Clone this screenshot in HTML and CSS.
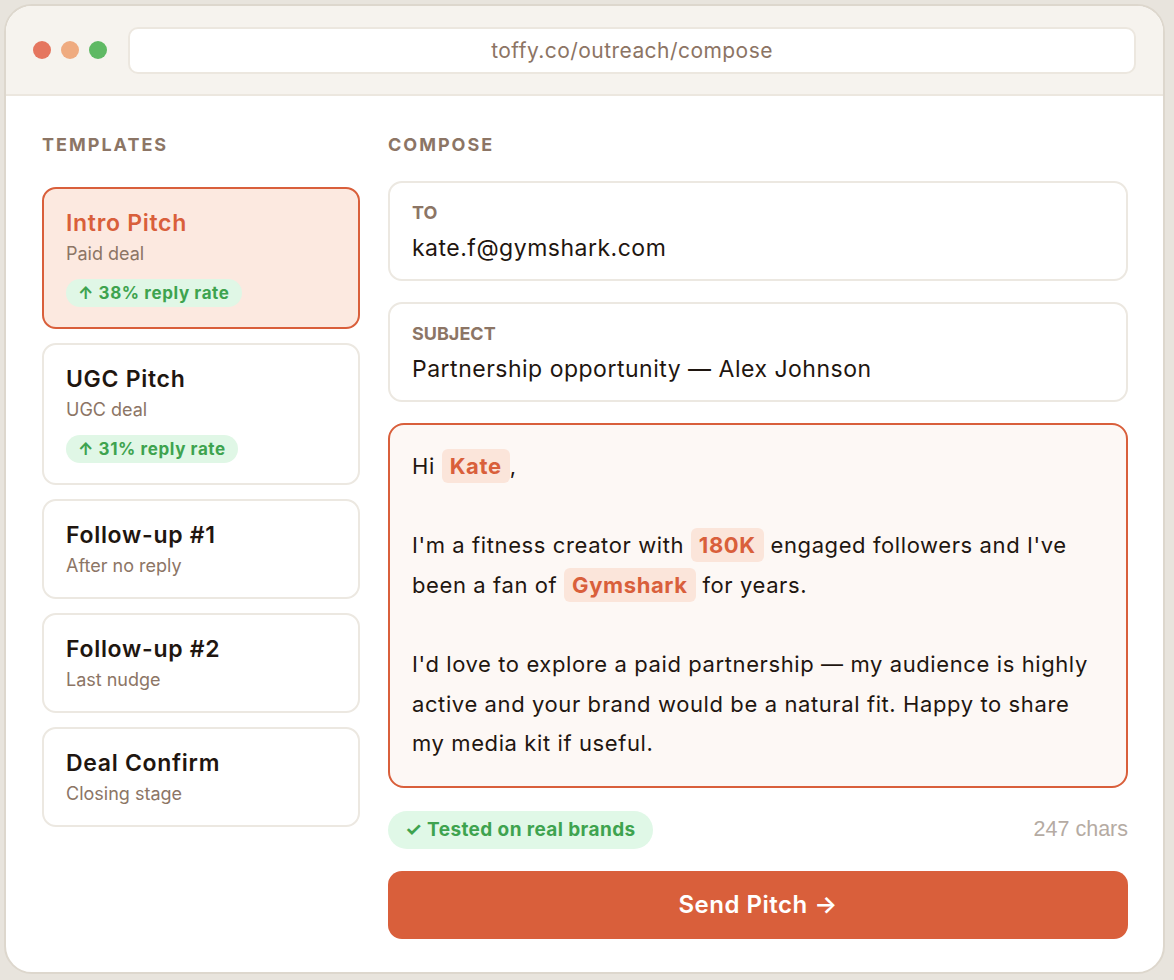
FILE: index.html
```html
<!DOCTYPE html>
<html lang="en">
<head>
    <meta charset="UTF-8">
    <meta name="viewport" content="width=device-width, initial-scale=1.0">
    <title>Toffy - Compose</title>
    <link rel="stylesheet" href="styles.css">
</head>
<body>
    <div class="window">
        <div class="titlebar">
            <div class="dots">
                <span class="dot red"></span>
                <span class="dot orange"></span>
                <span class="dot green"></span>
            </div>
            <div class="url">toffy.co/outreach/compose</div>
        </div>

        <div class="content">
            <aside class="templates">
                <h2 class="section-label left">Templates</h2>
                <div class="template-list">
                    <div class="template active">
                        <div class="template-title">Intro Pitch</div>
                        <div class="template-sub">Paid deal</div>
                        <span class="rate">↑ 38% reply rate</span>
                    </div>
                    <div class="template">
                        <div class="template-title">UGC Pitch</div>
                        <div class="template-sub">UGC deal</div>
                        <span class="rate">↑ 31% reply rate</span>
                    </div>
                    <div class="template">
                        <div class="template-title">Follow-up #1</div>
                        <div class="template-sub">After no reply</div>
                    </div>
                    <div class="template">
                        <div class="template-title">Follow-up #2</div>
                        <div class="template-sub">Last nudge</div>
                    </div>
                    <div class="template">
                        <div class="template-title">Deal Confirm</div>
                        <div class="template-sub">Closing stage</div>
                    </div>
                </div>
            </aside>

            <main class="compose">
                <h2 class="section-label right">Compose</h2>

                <div class="field">
                    <div class="field-label">TO</div>
                    <div class="field-value">kate.f@gymshark.com</div>
                </div>
                <div class="field">
                    <div class="field-label">SUBJECT</div>
                    <div class="field-value">Partnership opportunity — Alex Johnson</div>
                </div>

                <div class="message">
                    <p>Hi <span class="chip">Kate</span>,</p>
                    <p>I'm a fitness creator with <span class="chip">180K</span> engaged followers and I've been a fan of <span class="chip">Gymshark</span> for years.</p>
                    <p>I'd love to explore a paid partnership — my audience is highly active and your brand would be a natural fit. Happy to share my media kit if useful.</p>
                </div>

                <div class="meta-row">
                    <span class="tested">✓ Tested on real brands</span>
                    <span class="chars">247 chars</span>
                </div>

                <button type="button" class="send">Send Pitch →</button>
            </main>
        </div>
    </div>
</body>
</html>
```

FILE: styles.css
```css
*{
    box-sizing: border-box;
}

body{
    margin: 0;
    padding: 4px;
    background-color: #e8e4dd;
    font-family: "Inter", "DejaVu Sans", sans-serif;
    color: #1f1610;
}

.window{
    width: 1161px;
    height: 970px;
    background-color: #fff;
    border: 2px solid #ddd7cd;
    border-radius: 28px;
    overflow: hidden;
}

.titlebar{
    height: 90px;
    display: flex;
    align-items: center;
    padding: 0 27px;
    background-color: #f6f3ee;
    border-bottom: 2px solid #ece7df;
}

.dots{
    display: flex;
    gap: 10px;
    margin-right: 21px;
}

.dot{
    width: 18px;
    height: 18px;
    border-radius: 50%;
}

.dot.red{ background-color: #e5765f; }
.dot.orange{ background-color: #efab80; }
.dot.green{ background-color: #5fb964; }

.url{
    flex: 1;
    height: 47px;
    display: flex;
    align-items: center;
    justify-content: center;
    background-color: #fff;
    border: 2px solid #ece7df;
    border-radius: 10px;
    color: #8c7464;
    font-size: 21px;
    letter-spacing: 0.45px;
}

.content{
    display: grid;
    grid-template-columns: 318px 1fr;
    gap: 28px;
    padding: 38px 35px 0 36px;
}

.section-label{
    margin: 0;
    font-size: 18px;
    line-height: 22px;
    font-weight: 700;
    letter-spacing: 2px;
    text-transform: uppercase;
    color: #8c7565;
}

.section-label.left{ margin-bottom: 31px; }
.section-label.right{ margin-bottom: 25px; }

.template-list{
    display: flex;
    flex-direction: column;
    gap: 14px;
}

.template{
    padding: 20px 22px;
    border: 2px solid #ece8e1;
    border-radius: 14px;
    background-color: #fff;
}

.template.active{
    background-color: #fce9e0;
    border-color: #d95f3b;
}

.template-title{
    font-size: 23px;
    line-height: 28px;
    font-weight: 600;
    letter-spacing: 0.7px;
}

.active .template-title{
    color: #d95f3b;
}

.template-sub{
    margin-top: 6px;
    font-size: 18px;
    line-height: 22px;
    color: #8c7565;
}

.rate{
    display: inline-flex;
    align-items: center;
    height: 28px;
    margin-top: 14px;
    padding: 0 12px;
    border-radius: 14px;
    background-color: #e0f7e6;
    color: #3ea34f;
    font-size: 17px;
    font-weight: 700;
    letter-spacing: 0.6px;
}

.field{
    padding: 20px 22px 16px;
    border: 2px solid #ece8e1;
    border-radius: 14px;
    margin-bottom: 21px;
}

.field-label{
    font-size: 18px;
    line-height: 20px;
    font-weight: 700;
    color: #8c7565;
}

.field-value{
    margin-top: 10px;
    font-size: 23px;
    line-height: 30px;
    letter-spacing: 0.5px;
}

.message{
    padding: 22px 22px;
    border: 2px solid #d95f3b;
    border-radius: 16px;
    background-color: #fdf8f5;
    font-size: 22px;
    line-height: 1.8;
    letter-spacing: 0.6px;
}

.message p{
    margin: 0 0 39.6px;
}

.message p:last-child{
    margin-bottom: 0;
}

.chip{
    padding: 4px 8px;
    border-radius: 6px;
    background-color: #fbe5da;
    color: #d95f3b;
    font-weight: 700;
}

.meta-row{
    display: flex;
    justify-content: space-between;
    align-items: center;
    margin: 23px 0 22px;
}

.tested{
    display: inline-flex;
    align-items: center;
    height: 38px;
    padding: 0 17px;
    border-radius: 19px;
    background-color: #e0f8e7;
    color: #3ea34f;
    font-size: 19px;
    font-weight: 700;
    letter-spacing: 0.4px;
}

.chars{
    font-family: "Liberation Sans", sans-serif;
    font-size: 21.5px;
    color: #b5aba3;
}

.send{
    width: 100%;
    height: 68px;
    border: none;
    border-radius: 14px;
    background-color: #d95f3b;
    color: #fff;
    font-family: inherit;
    font-size: 24px;
    font-weight: 600;
    letter-spacing: 0.5px;
}
```
